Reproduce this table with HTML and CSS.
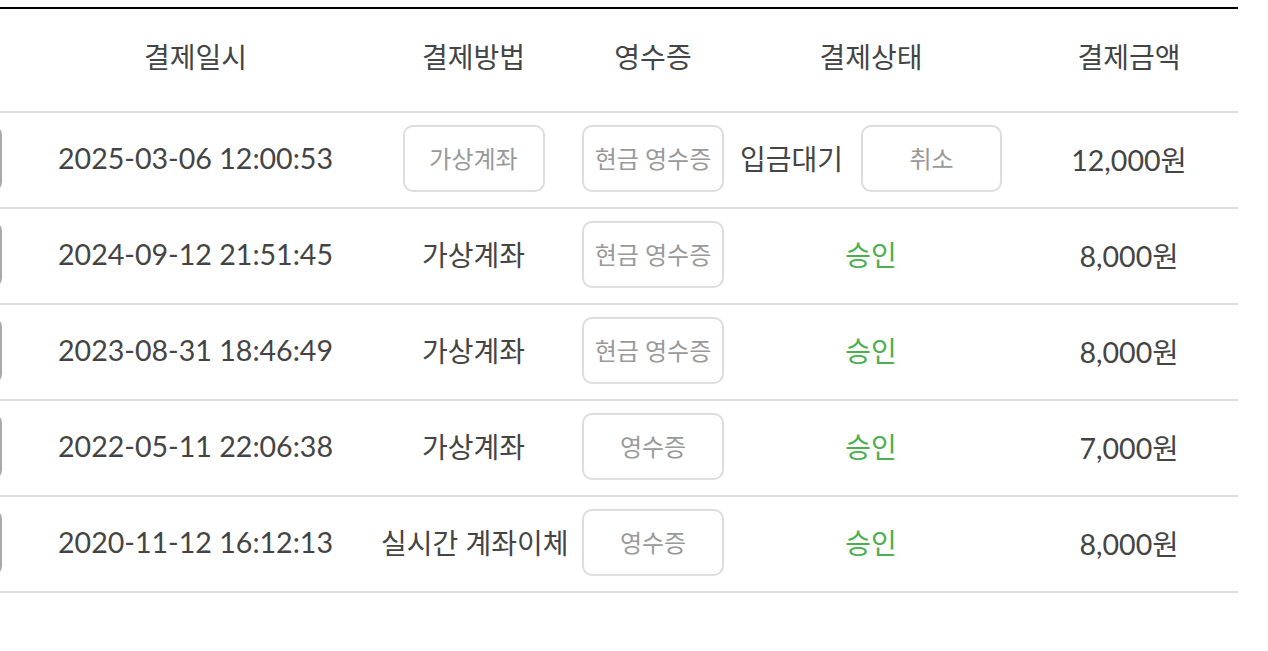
FILE: index.html
```html
<!DOCTYPE html>
<html lang="ko">
<head>
  <meta charset="UTF-8" />
  <meta name="viewport" content="width=device-width, initial-scale=1.0" />
  <title>결제내역</title>
  <link rel="stylesheet" href="styles.css">
</head>
<body>
  <div class="history">
    <table class="pay-table">
      <colgroup>
        <col class="c-check">
        <col class="c-date">
        <col class="c-method">
        <col class="c-receipt">
        <col class="c-status">
        <col class="c-amount">
      </colgroup>
      <thead>
        <tr>
          <th></th>
          <th>결제일시</th>
          <th>결제방법</th>
          <th>영수증</th>
          <th>결제상태</th>
          <th class="amount">결제금액</th>
        </tr>
      </thead>
      <tbody>
        <tr>
          <td><button class="btn btn-side" aria-label="상세"></button></td>
          <td class="num">2025-03-06 12:00:53</td>
          <td><button class="btn">가상계좌</button></td>
          <td><button class="btn">현금 영수증</button></td>
          <td>
            <div class="wait">
              <span>입금대기</span>
              <button class="btn">취소</button>
            </div>
          </td>
          <td class="num amount">12,000원</td>
        </tr>
        <tr>
          <td><button class="btn btn-side" aria-label="상세"></button></td>
          <td class="num">2024-09-12 21:51:45</td>
          <td>가상계좌</td>
          <td><button class="btn">현금 영수증</button></td>
          <td class="ok">승인</td>
          <td class="num amount">8,000원</td>
        </tr>
        <tr>
          <td><button class="btn btn-side" aria-label="상세"></button></td>
          <td class="num">2023-08-31 18:46:49</td>
          <td>가상계좌</td>
          <td><button class="btn">현금 영수증</button></td>
          <td class="ok">승인</td>
          <td class="num amount">8,000원</td>
        </tr>
        <tr>
          <td><button class="btn btn-side" aria-label="상세"></button></td>
          <td class="num">2022-05-11 22:06:38</td>
          <td>가상계좌</td>
          <td><button class="btn">영수증</button></td>
          <td class="ok">승인</td>
          <td class="num amount">7,000원</td>
        </tr>
        <tr>
          <td><button class="btn btn-side" aria-label="상세"></button></td>
          <td class="num">2020-11-12 16:12:13</td>
          <td>실시간 계좌이체</td>
          <td><button class="btn">영수증</button></td>
          <td class="ok">승인</td>
          <td class="num amount">8,000원</td>
        </tr>
      </tbody>
    </table>
  </div>
</body>
</html>
```

FILE: styles.css
```css
body {
  margin: 0;
  padding: 0;
  background: #fff;
  font-family: Lato, "Noto Sans CJK KR", sans-serif;
  color: #444;
  overflow: hidden;
}
.history {
  padding-top: 7px;
}
.pay-table {
  table-layout: fixed;
  width: 1320px;
  margin-left: -82px;
  border-collapse: separate;
  border-spacing: 0;
  border-top: 2px solid #000;
}
.c-check { width: 100px; }
.c-date { width: 355px; }
.c-method { width: 201px; }
.c-receipt { width: 158px; }
.c-status { width: 278px; }
.c-amount { width: 228px; }
.pay-table th,
.pay-table td {
  padding: 0 8px 4px;
  text-align: center;
  vertical-align: middle;
  font-size: 28px;
  font-weight: normal;
  white-space: nowrap;
  border-bottom: 2px solid #ddd;
  box-sizing: border-box;
}
.pay-table th {
  height: 104px;
  padding-bottom: 8px;
}
.pay-table td {
  height: 96px;
}
.pay-table .num {
  font-size: 28.6px;
}
.pay-table .amount {
  padding-left: 10px;
  padding-right: 0;
}
.pay-table .ok {
  color: #4caf50;
}
.wait {
  display: flex;
  align-items: center;
  justify-content: center;
  gap: 18px;
}
.btn {
  width: 142px;
  height: 67px;
  padding: 0 0 2px;
  background: #fff;
  border: 2px solid #ddd;
  border-radius: 10px;
  color: #999;
  font-family: Lato, "Noto Sans CJK KR", sans-serif;
  font-size: 24px;
  vertical-align: middle;
  cursor: pointer;
}
.btn-side {
  width: 68px;
  border-color: #aaa;
}
```
